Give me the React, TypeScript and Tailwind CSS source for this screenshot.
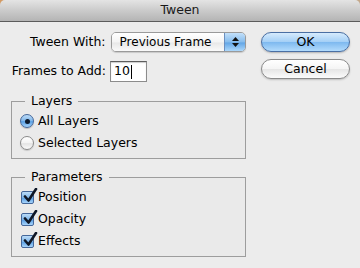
const font = "font-['DejaVu_Sans',sans-serif]";

function Radio({ checked }: { checked: boolean }) {
  return checked ? (
    <span className="flex h-[14px] w-[14px] shrink-0 items-center justify-center rounded-full border border-[#44679a] bg-[linear-gradient(to_bottom,#bcdcf8_0%,#7fb6ea_50%,#5aa0e4_55%,#a7d4fb_100%)] shadow-[0_1px_1px_rgba(0,0,0,0.2)]">
      <span className="h-[5px] w-[5px] rounded-full bg-[#0d1a2c]" />
    </span>
  ) : (
    <span className="h-[14px] w-[14px] shrink-0 rounded-full border border-[#8a8a8a] bg-[linear-gradient(to_bottom,#ffffff_0%,#f3f3f3_50%,#e4e4e4_55%,#fbfbfb_100%)] shadow-[0_1px_1px_rgba(0,0,0,0.15)]" />
  );
}

function Check() {
  return (
    <span className="relative h-[13px] w-[13px] shrink-0 rounded-[2px] border border-[#44679a] bg-[linear-gradient(to_bottom,#bcdcf8_0%,#7fb6ea_50%,#5aa0e4_55%,#a7d4fb_100%)]">
      <svg viewBox="0 0 16 16" className="absolute -top-[4px] left-[0px] h-[16px] w-[16px]">
        <path d="M3 8.5 L6.5 12.5 L14 1" fill="none" stroke="#0f1726" strokeWidth="2.6" strokeLinecap="round" strokeLinejoin="round" />
      </svg>
    </span>
  );
}

function Group({ title, height, children }: { title: string; height: string; children: React.ReactNode }) {
  return (
    <fieldset className={`ml-[11px] w-[235px] border border-[#9d9d9d] bg-[#eaeaea] ${height}`}>
      <legend className="ml-[13px] px-[6px] text-[12.5px] leading-[14px]">{title}</legend>
      <div className="flex flex-col pl-[8px] text-[12.5px]">{children}</div>
    </fieldset>
  );
}

export default function App() {
  return (
    <div className={`${font} flex h-[268px] w-[360px] flex-col bg-[#ececec] text-[12px] text-black`}>
      <div className="bg-[linear-gradient(to_right,#d49a62,#b9a896_8%,#b9a896_92%,#c4a88a)]">
        <div className="flex h-[22px] items-center justify-center rounded-t-[5px] border-b border-[#5c5c5c] bg-[linear-gradient(to_bottom,#e4e4e4_0%,#cdcdcd_45%,#b4b4b4_100%)] text-[12.5px] text-[#1a1a1a]">
          Tween
        </div>
      </div>

      <div className="flex pt-[10px]">
        <div className="flex w-[246px] flex-col">
          <div className="flex h-[20px] items-center">
            <span className="w-[111px] pr-[5px] text-right text-[12.5px]">Tween With:</span>
            <div className="flex h-[20px] w-[136px] overflow-hidden rounded-[5px] border border-[#9a9a9a] shadow-[0_1px_1px_rgba(0,0,0,0.15)]">
              <span className="flex flex-1 items-center bg-[linear-gradient(to_bottom,#ffffff_0%,#f4f4f4_50%,#e8e8e8_55%,#fafafa_100%)] pl-[8px]">
                Previous Frame
              </span>
              <span className="flex w-[21px] flex-col items-center justify-center gap-[2px] border-l border-[#6b8fbf] bg-[linear-gradient(to_bottom,#c3e0fa_0%,#86bcec_50%,#63a6e6_55%,#add8fb_100%)]">
                <svg viewBox="0 0 7 4" className="h-[4px] w-[7px]">
                  <path d="M0 4 L3.5 0 L7 4 Z" fill="#111" />
                </svg>
                <svg viewBox="0 0 7 4" className="h-[4px] w-[7px]">
                  <path d="M0 0 L3.5 4 L7 0 Z" fill="#111" />
                </svg>
              </span>
            </div>
          </div>

          <div className="mt-[9px] flex h-[21px] items-center">
            <span className="w-[110px] pr-[4px] text-right text-[12.5px]">Frames to Add:</span>
            <div className="flex h-[21px] w-[37px] items-center border border-[#8c8c8c] border-t-[#5e5e5e] bg-white pl-[3px] text-[12.5px] shadow-[inset_0_1px_1px_rgba(0,0,0,0.2)]">
              10
              <span className="ml-[1px] h-[14px] w-[1px] bg-black" />
            </div>
          </div>

          <div className="mt-[12px]">
            <Group title="Layers" height="h-[65px]">
              <div className="mt-[2px] flex h-[22px] items-center gap-[4px]">
                <Radio checked />
                <span>All Layers</span>
              </div>
              <div className="flex h-[22px] items-center gap-[4px]">
                <Radio checked={false} />
                <span>Selected Layers</span>
              </div>
            </Group>
          </div>

          <div className="mt-[11px]">
            <Group title="Parameters" height="h-[87px]">
              <div className="mt-[2px] flex h-[22px] items-center gap-[4px] pl-[1px]">
                <Check />
                <span>Position</span>
              </div>
              <div className="flex h-[22px] items-center gap-[4px] pl-[1px]">
                <Check />
                <span>Opacity</span>
              </div>
              <div className="flex h-[22px] items-center gap-[4px] pl-[1px]">
                <Check />
                <span>Effects</span>
              </div>
            </Group>
          </div>
        </div>

        <div className="ml-[15px] flex flex-col text-[12.5px]">
          <button className="flex h-[20px] w-[89px] items-center justify-center rounded-full border border-[#4a6fa3] bg-[linear-gradient(to_bottom,#d6ebfd_0%,#a5d0f6_48%,#7eb9ef_52%,#b2dbfc_100%)] shadow-[0_1px_2px_rgba(0,0,0,0.25)]">
            OK
          </button>
          <button className="mt-[7px] flex h-[20px] w-[89px] items-center justify-center rounded-full border border-[#8a8a8a] bg-[linear-gradient(to_bottom,#ffffff_0%,#f5f5f5_48%,#e6e6e6_52%,#fbfbfb_100%)] shadow-[0_1px_2px_rgba(0,0,0,0.2)]">
            Cancel
          </button>
        </div>
      </div>
    </div>
  );
}
